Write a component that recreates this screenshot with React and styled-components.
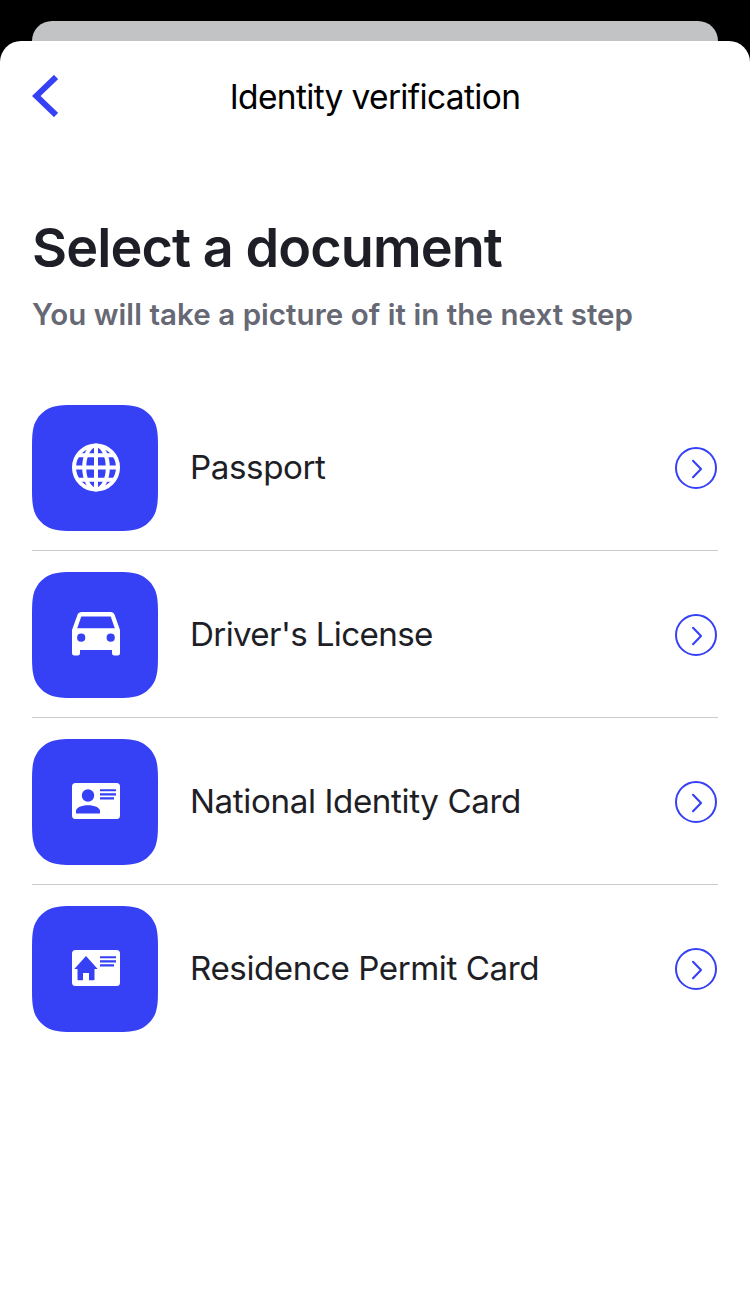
import React from 'react';
import styled, { createGlobalStyle } from 'styled-components';

const BLUE = '#3640f5';

const GlobalStyle = createGlobalStyle`
  * { box-sizing: border-box; }
  html, body { margin: 0; background: #000; }
  body { font-family: Inter, "Liberation Sans", sans-serif; }
`;

const Screen = styled.div`
  width: 750px;
  height: 1295px;
  display: flex;
  flex-direction: column;
  padding-top: 21px;
  overflow: hidden;
  background: #000;
`;

const BackSheet = styled.div`
  flex: none;
  height: 20px;
  margin: 0 32px;
  background: #c2c3c5;
  border-radius: 20px 20px 0 0;
`;

const Sheet = styled.main`
  flex: 1;
  background: #fff;
  border-radius: 21px 21px 0 0;
`;

const Header = styled.header`
  display: grid;
  grid-template-columns: 60px 1fr 60px;
  align-items: center;
  height: 112px;
  padding: 0 32px;
`;

const BackButton = styled.button`
  display: flex;
  padding: 0;
  border: 0;
  background: none;
  svg { display: block; margin-bottom: 2px; }
`;

const HeaderTitle = styled.div`
  color: #000;
  font-size: 33.5px;
  line-height: 40px;
  letter-spacing: -0.66px;
  text-align: center;
  white-space: nowrap;
`;

const Intro = styled.section`
  height: 252px;
  padding: 60px 32px 0;
`;

const Title = styled.h1`
  margin: 0;
  color: #1e1e26;
  font-size: 54px;
  font-weight: 600;
  line-height: 69px;
  letter-spacing: -0.92px;
  white-space: nowrap;
`;

const Subtitle = styled.p`
  margin: 12px 0 0;
  color: #666874;
  font-size: 29.5px;
  font-weight: 600;
  line-height: 40px;
  letter-spacing: 0.05px;
  white-space: nowrap;
`;

const List = styled.ul`
  margin: 0;
  padding: 0 32px;
  list-style: none;
`;

const Row = styled.li`
  display: flex;
  align-items: center;
  height: ${(p) => (p.$last ? 126 : 146)}px;
  margin-bottom: 21px;
  padding-bottom: ${(p) => (p.$last ? 0 : 19)}px;
  border-bottom: ${(p) => (p.$last ? '0' : '1px solid #cacbcf')};
`;

const Tile = styled.div`
  flex: none;
  width: 126px;
  height: 126px;
  background: ${BLUE};
  clip-path: path("M47.4 0H78.6C92.3 0 99.1 0 106.4 2.3C114.4 5.2 120.8 11.6 123.7 19.6C126 26.9 126 33.7 126 47.4V78.6C126 92.3 126 99.1 123.7 106.4C120.8 114.4 114.4 120.8 106.4 123.7C99.1 126 92.3 126 78.6 126H47.4C33.7 126 26.9 126 19.6 123.7C11.6 120.8 5.2 114.4 2.3 106.4C0 99.1 0 92.3 0 78.6V47.4C0 33.7 0 26.9 2.3 19.6C5.2 11.6 11.6 5.2 19.6 2.3C26.9 0 33.7 0 47.4 0Z");
  svg { display: block; }
`;

const Label = styled.span`
  flex: 1;
  padding: 0 0 1px 32px;
  color: #1e1e26;
  font-size: 33.2px;
  line-height: 41px;
  letter-spacing: ${(p) => p.$tracking}px;
  white-space: nowrap;
`;

const Arrow = styled.svg`
  flex: none;
  width: 42px;
  height: 42px;
  margin-right: 1px;
`;

const Globe = () => (
  <svg width="126" height="126" fill="none" stroke="#fff" strokeWidth="4">
    <circle cx="64" cy="62.5" r="22" />
    <ellipse cx="64" cy="62.5" rx="11.8" ry="22" />
    <path d="M64 40V85M41 62.5H87M45 50.2H83M45 74.8H83" />
  </svg>
);

const Car = () => (
  <svg width="126" height="126" fill="#fff">
    <path
      fillRule="evenodd"
      d="M50 40H79Q81.6 40 82.5 42.5L88 58V81.3Q88 83.5 85.8 83.5H82.2Q80 83.5 80 81.3V78H48V81.3Q48 83.5 45.8 83.5H42.2Q40 83.5 40 81.3V58L45.6 42.5Q46.5 40 50 40ZM49.3 44.5L45.2 56.3H82.8L78.7 44.5Z"
    />
    <circle cx="49.2" cy="65.7" r="4.1" fill={BLUE} />
    <circle cx="78.7" cy="65.7" r="4.1" fill={BLUE} />
  </svg>
);

const CardBase = ({ children }) => (
  <svg width="126" height="126" fill={BLUE}>
    <rect x="40" y="44" width="48" height="36" rx="3.5" fill="#fff" />
    <path d="M68 50.2H84V52.3H68ZM68 54.2H84V56.4H68ZM68 58.3H82V60.5H68Z" />
    {children}
  </svg>
);

const Identity = () => (
  <CardBase>
    <circle cx="56" cy="56.5" r="6.2" />
    <path d="M44 74.5V72C44 68.5 49.5 66.2 56 66.2S68 68.5 68 72V74.5Z" />
  </CardBase>
);

const Residence = () => (
  <CardBase>
    <path d="M54 50L65.7 63H62.5V73.5Q62.5 74.3 61.7 74.3H57V67H51V74.3H46.3Q45.5 74.3 45.5 73.5V63H42.3Z" />
  </CardBase>
);

const documents = [
  { label: 'Passport', Icon: Globe, tracking: -0.43 },
  { label: "Driver's License", Icon: Car, tracking: -0.66 },
  { label: 'National Identity Card', Icon: Identity, tracking: -0.4 },
  { label: 'Residence Permit Card', Icon: Residence, tracking: -0.45 },
];

export default function App() {
  return (
    <>
      <GlobalStyle />
      <Screen>
        <BackSheet />
        <Sheet>
          <Header>
            <BackButton aria-label="Back">
              <svg width="26" height="42" fill="none" stroke={BLUE} strokeWidth="5.9">
                <path d="M24 2L4.2 21L24 40" />
              </svg>
            </BackButton>
            <HeaderTitle>Identity verification</HeaderTitle>
          </Header>
          <Intro>
            <Title>Select a document</Title>
            <Subtitle>You will take a picture of it in the next step</Subtitle>
          </Intro>
          <List>
            {documents.map(({ label, Icon, tracking }, i) => (
              <Row key={label} $last={i === documents.length - 1}>
                <Tile><Icon /></Tile>
                <Label $tracking={tracking}>{label}</Label>
                <Arrow viewBox="0 0 42 42" fill="none" stroke={BLUE} strokeWidth="2">
                  <circle cx="21" cy="21" r="20" />
                  <path d="M18 13.8L26 22L18 30.2" strokeWidth="2.1" strokeLinecap="round" strokeLinejoin="round" />
                </Arrow>
              </Row>
            ))}
          </List>
        </Sheet>
      </Screen>
    </>
  );
}
